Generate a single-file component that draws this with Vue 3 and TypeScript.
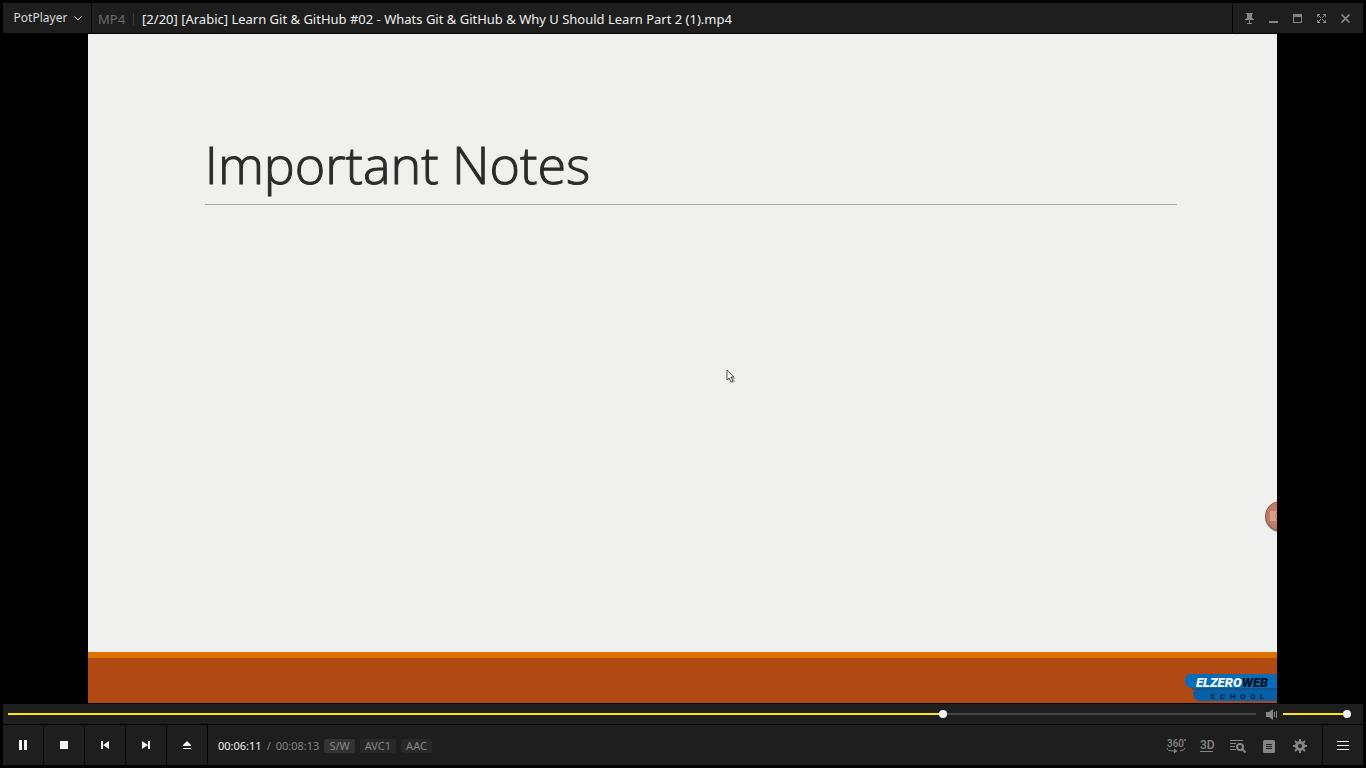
<script setup lang="ts">
import { computed, ref } from 'vue'

const duration = 493
const position = ref(370)
const volume = ref(100)
const codecs = ['S/W', 'AVC1', 'AAC']

const seekFill = computed(() => ({ '--fill': `${(position.value / duration) * 100}%` }))
const volumeFill = computed(() => ({ '--fill': `${volume.value}%` }))
</script>

<template>
  <div class="player">
    <header class="titlebar">
      <button class="panel brand" type="button">
        PotPlayer
        <svg width="8" height="5" viewBox="0 0 8 5"><path d="M.5.5 4 4 7.5.5" fill="none" stroke="#e0e0e0" /></svg>
      </button>
      <div class="panel caption">
        <span class="format">MP4</span>
        <h1>[2/20] [Arabic] Learn Git &amp; GitHub #02 - Whats Git &amp; GitHub &amp; Why U Should Learn Part 2 (1).mp4</h1>
      </div>
      <div class="panel window-buttons">
        <button type="button" aria-label="Always on top">
          <svg width="9" height="11" viewBox="0 0 9 11"><path d="M1 0h7v1H7v4h1v1h1v1H5v3h2v1H2v-1h2V7H0V6h1V5h1V1H1z" fill="#858585" /></svg>
        </button>
        <button type="button" aria-label="Minimize">
          <svg width="9" height="9" viewBox="0 0 9 9"><path d="M0 7h9v2H0z" fill="#858585" /></svg>
        </button>
        <button type="button" aria-label="Maximize">
          <svg width="9" height="9" viewBox="0 0 9 9"><path d="M0 0h9v9H0zM1 3v5h7V3z" fill="#858585" fill-rule="evenodd" /></svg>
        </button>
        <button type="button" aria-label="Full screen">
          <svg width="9" height="9" viewBox="0 0 9 9"><path d="M0 3V0h3v1H1v2zM6 0h3v3H8V1H6zM0 6h1v2h2v1H0zM8 6h1v3H6V8h2zM1 1h1v1H1zM2 2h1v1H2zM3 3h1v1H3zM5 3h1v1H5zM6 2h1v1H6zM7 1h1v1H7zM3 5h1v1H3zM2 6h1v1H2zM1 7h1v1H1zM5 5h1v1H5zM6 6h1v1H6zM7 7h1v1H7z" fill="#858585" /></svg>
        </button>
        <button type="button" aria-label="Close">
          <svg width="9" height="9" viewBox="0 0 9 9"><path d="m.5.5 8 8m0-8-8 8" stroke="#909090" stroke-width="1.5" /></svg>
        </button>
      </div>
    </header>

    <main class="stage">
      <section class="slide">
        <div class="slide-body"><h2>Important Notes</h2></div>
        <footer class="slide-foot">
          <svg class="logo" width="92" height="30" viewBox="0 0 92 30" role="img" aria-label="Elzero Web School">
            <path d="M12 14h80v14H14q-6-1-6-9z" fill="#0960a8" />
            <path d="M4 1h88v14H7q-6 0-7-7 0-5 4-7z" fill="#086cb9" />
            <path d="M7 16h85" stroke="#174c78" stroke-width="1" />
            <text x="11" y="14" class="logo-name" fill="#f4f8fb">ELZERO</text>
            <text x="57" y="14" class="logo-name" fill="#08131f">WEB</text>
            <text v-for="(letter, i) in 'SCHOOL'" :key="i" :x="25 + i * 10" y="26" class="logo-sub">{{ letter }}</text>
          </svg>
        </footer>
        <svg class="camera" width="12" height="32" viewBox="0 0 12 32">
          <circle cx="15" cy="17" r="15" fill="#8d817b" />
          <circle cx="15" cy="16" r="14.5" fill="#c07a68" stroke="#8f6155" />
          <path d="M5 11h7v10H5z" fill="#d9a08a" />
          <path d="M12 12q-3 4 0 8" fill="none" stroke="#c07a68" />
        </svg>
        <svg class="cursor" width="10" height="15" viewBox="0 0 10 15">
          <path d="M2 2v10l2-2 2 4 3-1-1-3h2z" fill="#b4b4b2" />
          <path d="M1 1v10l2-2 2 4 2-1-2-4h3z" fill="#f6f6f6" stroke="#555" stroke-width="1" />
        </svg>
      </section>
    </main>

    <div class="panel sliders">
      <input v-model.number="position" class="slider seek" type="range" min="0" :max="duration" :style="seekFill" aria-label="Seek" />
      <button type="button" class="mute" aria-label="Mute">
        <svg width="12" height="11" viewBox="0 0 12 11"><path d="M0 3h3l4-3v11L3 8H0zM8 3h1v5H8zM10 2h1v7h-1z" fill="#858585" /></svg>
      </button>
      <input v-model.number="volume" class="slider volume" type="range" min="0" max="100" :style="volumeFill" aria-label="Volume" />
    </div>

    <footer class="controls">
      <button class="panel key" type="button" aria-label="Pause">
        <svg width="8" height="10" viewBox="0 0 8 10"><path d="M0 0h3v10H0zM5 0h3v10H5z" fill="#f2f2f2" /></svg>
      </button>
      <button class="panel key" type="button" aria-label="Stop">
        <svg width="8" height="8" viewBox="0 0 8 8"><path d="M0 0h8v8H0z" fill="#f2f2f2" /></svg>
      </button>
      <button class="panel key" type="button" aria-label="Previous">
        <svg width="8" height="8" viewBox="0 0 8 8"><path d="M0 0h2v8H0zM8 0v8L2 4z" fill="#f2f2f2" /></svg>
      </button>
      <button class="panel key" type="button" aria-label="Next">
        <svg width="8" height="8" viewBox="0 0 8 8"><path d="M6 0h2v8H6zM0 0v8l6-4z" fill="#f2f2f2" /></svg>
      </button>
      <button class="panel key" type="button" aria-label="Open">
        <svg width="8" height="8" viewBox="0 0 8 8"><path d="M4 0 8 4v1H0V4zM0 7h8v1H0z" fill="#f2f2f2" /></svg>
      </button>
      <div class="panel status">
        <span class="time"><b>00:06:11</b><i>/</i>00:08:13</span>
        <span v-for="codec in codecs" :key="codec" class="tag" :class="{ active: codec === 'S/W' }">{{ codec }}</span>
        <div class="tools">
          <button type="button" aria-label="360 degree video">
            <svg width="20" height="16" viewBox="0 0 20 16">
              <text x="1" y="9" class="tool-text small">360</text>
              <path d="M18 1h2v2h-2z" fill="#6c6c6c" />
              <path d="M1 10q0 3 6 3h3m4 0q5-1 5-3" fill="none" stroke="#858585" />
              <path d="M8 10.500 11.500 13 8 15.500z" fill="#858585" />
            </svg>
          </button>
          <button type="button" aria-label="3D video">
            <svg width="16" height="14" viewBox="0 0 16 14">
              <text x="1" y="10" class="tool-text">3D</text>
              <path d="M1 12h13v1H1z" fill="#858585" />
            </svg>
          </button>
          <button type="button" aria-label="Search playlist">
            <svg width="16" height="14" viewBox="0 0 16 14">
              <path d="M0 1h13v1H0zM0 4h6v1H0zM0 7h5v1H0zM0 10h6v1H0z" fill="#858585" />
              <circle cx="10" cy="8" r="3" fill="none" stroke="#858585" stroke-width="2" />
              <path d="m12 10 3.500 3.500" stroke="#858585" stroke-width="2" />
            </svg>
          </button>
          <button type="button" aria-label="Playlist">
            <svg width="12" height="13" viewBox="0 0 12 13">
              <rect width="12" height="13" rx="1.500" fill="#858585" />
              <path d="M3 4.500h6M3 6.500h6M3 8.500h6" stroke="#1e1e1e" />
            </svg>
          </button>
          <button type="button" aria-label="Preferences">
            <svg width="14" height="14" viewBox="0 0 14 14">
              <circle cx="7" cy="7" r="3.500" fill="none" stroke="#858585" stroke-width="3" />
              <path d="M7 0v3M7 11v3M0 7h3M11 7h3M2 2l2.500 2.500M9.500 9.500 12 12M12 2 9.500 4.500M4.500 9.500 2 12" stroke="#858585" stroke-width="2" />
            </svg>
          </button>
        </div>
      </div>
      <button class="panel key" type="button" aria-label="Menu">
        <svg width="12" height="9" viewBox="0 0 12 9"><path d="M0 0h12v1H0zM0 4h12v1H0zM0 8h12v1H0z" fill="#f2f2f2" /></svg>
      </button>
    </footer>
  </div>
</template>

<style>
body {
  margin: 0;
  background: #000;
}
</style>

<style scoped>
* {
  box-sizing: border-box;
}
.player {
  display: flex;
  flex-direction: column;
  gap: 1px;
  height: 100vh;
  padding: 3px;
  overflow: hidden;
  background: #000;
  color: #858585;
  font: 12px/16px "Noto Sans", "Open Sans", sans-serif;
}
button {
  display: flex;
  align-items: center;
  justify-content: center;
  padding: 0;
  border: 0;
  background: transparent;
  color: inherit;
  font: inherit;
}
.panel {
  background: #1e1e1e;
}
.titlebar,
.controls {
  display: flex;
  flex: none;
  gap: 1px;
}
.titlebar {
  height: 30px;
}
.brand {
  width: 88px;
  padding-left: 2px;
  gap: 7px;
  color: #d8d8d8;
}
.caption {
  display: flex;
  flex: 1;
  align-items: center;
  min-width: 0;
  padding: 2px 6px 0;
}
.format {
  padding-right: 8px;
  color: #6c6c6c;
  border-right: 1px solid #3a3a3a;
  font-size: 13px;
  line-height: 12px;
}
h1 {
  margin: 0;
  padding-left: 8px;
  overflow: hidden;
  color: #f0f0f0;
  font-size: 13px;
  font-weight: 400;
  text-overflow: ellipsis;
  white-space: nowrap;
}
.window-buttons {
  display: flex;
  padding: 0 6px 0 4px;
}
.window-buttons button {
  width: 24px;
}
.stage {
  display: flex;
  flex: 1;
  justify-content: center;
  min-height: 0;
  padding-right: 1px;
}
.slide {
  position: relative;
  display: flex;
  flex-direction: column;
  height: 100%;
  aspect-ratio: 16 / 9;
  overflow: hidden;
  background: #f0f0ee;
}
.slide-body {
  flex: 1;
  padding: 96px 100px 0 117px;
}
h2 {
  margin: 0;
  padding-bottom: 6px;
  border-bottom: 1px solid #aaa;
  color: #2b2b2b;
  font: 300 52px/68px "Open Sans", "Noto Sans", sans-serif;
  -webkit-text-stroke: 1px #2b2b2b;
}
.slide-foot {
  display: flex;
  justify-content: flex-end;
  align-items: flex-end;
  height: 51px;
  border-top: 6px solid #dc7200;
  background: #b04914;
}
.logo-name {
  font: italic 900 13px Roboto, sans-serif;
}
.logo-sub {
  fill: #06213f;
  font: 700 8px Roboto, sans-serif;
}
.camera {
  position: absolute;
  top: 70%;
  right: 0;
  margin-top: -2px;
}
.cursor {
  position: absolute;
  top: 50%;
  left: 54%;
  margin-left: -4px;
}
.sliders {
  display: flex;
  flex: none;
  align-items: center;
  height: 20px;
  padding: 0 12px 0 5px;
}
.slider {
  height: 8px;
  margin: 0;
  appearance: none;
  background: linear-gradient(#ffe600, #ffe600) 0 3px / var(--fill) 2px no-repeat,
    linear-gradient(#444, #444) 0 3px / 100% 2px no-repeat;
}
.slider::-webkit-slider-thumb {
  width: 8px;
  height: 8px;
  appearance: none;
  border-radius: 50%;
  background: #f2f2f2;
}
.seek {
  flex: 1;
  min-width: 0;
}
.mute {
  width: 12px;
  margin: 0 5px 0 10px;
}
.volume {
  width: 68px;
}
.controls {
  height: 40px;
}
.key {
  width: 40px;
}
.status {
  display: flex;
  flex: 1;
  align-items: center;
  min-width: 0;
  padding: 2px 7px 0 10px;
  font-size: 11px;
}
.time {
  margin-right: 5px;
}
.time b {
  color: #f2f2f2;
  font-weight: 400;
}
.time i {
  margin: 0 5px;
  font-style: normal;
}
.tag {
  margin-right: 5px;
  padding: 0 5px;
  border-radius: 2px;
  background: #282828;
  line-height: 14px;
}
.tag.active {
  background: #333;
}
.tools {
  display: flex;
  margin-left: auto;
}
.tools button {
  width: 31px;
}
.tool-text {
  fill: #858585;
  font: 500 12px Roboto, sans-serif;
}
.tool-text.small {
  font-size: 10px;
}
</style>
